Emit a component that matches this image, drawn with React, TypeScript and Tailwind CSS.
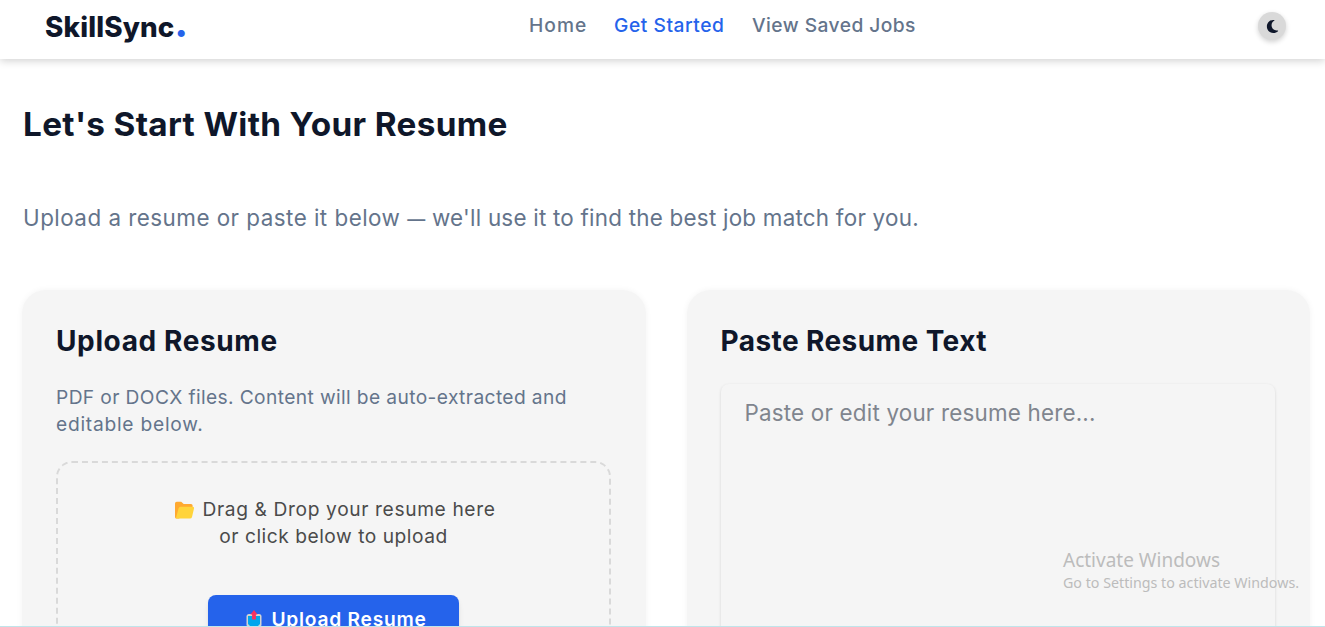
import { FaMoon } from "react-icons/fa6";

const links = [
  { label: "Home", style: "w-[57px] text-[#64748b] tracking-[1px]" },
  { label: "Get Started", style: "w-[110px] text-[#2563eb] tracking-[0.550px]" },
  { label: "View Saved Jobs", style: "w-[163px] text-[#64748b] tracking-[0.450px]" },
];

function FolderIcon() {
  return (
    <svg viewBox="0 0 20 18" className="h-[18px] w-5 shrink-0" aria-hidden="true">
      <path d="M0 2.500Q0 .8 1.700 .8h4.500L8.700 3H16q1.600 0 1.600 1.600V8L4 17.500H1.500Q0 17.500 0 16z" fill="#ffa930" />
      <path d="M3.600 7.300Q4 5.800 5.600 5.800h12q1.800 0 1.400 1.700l-2 8.500q-.4 1.500-2 1.500H1.700Q.8 17.500 1.100 16.500z" fill="#ffd43b" />
    </svg>
  );
}

function OutboxIcon() {
  return (
    <svg viewBox="0 0 16 18" className="h-[18px] w-4 shrink-0" aria-hidden="true">
      <rect x="0.500" y="4" width="15" height="13" rx="2.500" fill="#d3d3d3" />
      <path d="M2 6h12v8l-2 2H4l-2-2z" fill="#00a6ed" />
      <path d="M8 0l3.500 4.500H9.900V9.500H6.100V4.500H4.500z" fill="#f8315f" />
    </svg>
  );
}

export default function App() {
  return (
    <div className="relative h-[627px] overflow-hidden bg-white font-[Inter,sans-serif] text-[#0f172a]">
      <header className="grid h-[59px] grid-cols-[529px_1fr_auto] items-start bg-white pr-[39px] shadow-[0_2px_8px_rgba(0,0,0,0.18)]">
        <div className="pt-1 pl-[45px] text-[27.800px] leading-10 font-extrabold tracking-[0.150px] whitespace-nowrap">
          SkillSync<span className="text-[38px] leading-none tracking-normal text-[#2563eb]">.</span>
        </div>
        <nav className="flex gap-7 pt-[11px] text-[19.200px] leading-7 font-medium whitespace-nowrap">
          {links.map((l) => (
            <a key={l.label} className={l.style}>{l.label}</a>
          ))}
        </nav>
        <button className="mt-3 flex size-7 items-center justify-center rounded-full bg-[#d9d9d9] shadow-[0_2px_5px_rgba(0,0,0,0.18)]">
          <FaMoon className="size-[15px]" />
        </button>
      </header>
      <main className="pr-[15px] pl-[22px]">
        <h1 className="pt-[41px] pl-px text-[33.300px] leading-[48px] font-bold tracking-[0.350px] whitespace-nowrap">Let's Start With Your Resume</h1>
        <p className="mt-[53px] pl-px text-[22.400px] leading-[34px] tracking-[0.240px] whitespace-nowrap text-[#64748b]">
          <span className="tracking-[0.480px]">Upload a resume or paste it below </span>
          <span className="text-[18px] leading-none font-medium">—</span> we'll use it to find the best job match for you.
        </p>
        <div className="mt-[55px] grid grid-cols-2 gap-[41px]">
          <section className="h-[420px] rounded-3xl bg-[#f5f5f5] px-[34px] pt-[31px] shadow-[0_0_6px_rgba(0,0,0,0.05)]">
            <h2 className="text-[28px] leading-10 font-bold tracking-[0.620px] whitespace-nowrap">Upload Resume</h2>
            <p className="mt-[23px] text-[19.200px] leading-[27px] whitespace-nowrap text-[#64748b]">
              <span className="tracking-[0.380px]">PDF or DOCX files. Content will be auto-extracted and</span>
              <br />
              <span className="tracking-[0.750px]">editable below.</span>
            </p>
            <div className="mt-[23px] flex h-[240px] w-[555px] flex-col items-center rounded-2xl border-2 border-dashed border-[#d9d9d9] pt-[33px]">
              <div className="text-center text-[19.200px] leading-[27px] whitespace-nowrap text-[#4b4b4b]">
                <div className="flex items-center gap-[8px] pl-[3px] tracking-[0.620px]"><FolderIcon /><span>Drag &amp; Drop your resume here</span></div>
                <div className="tracking-[0.520px]">or click below to upload</div>
              </div>
              <button className="mt-[45px] flex h-[48px] w-[251px] items-center justify-center gap-[9px] rounded-lg bg-[#2563eb] pl-[6px] text-[19.200px] font-semibold tracking-[0.750px] whitespace-nowrap text-white shadow-md">
                <OutboxIcon /><span>Upload Resume</span>
              </button>
            </div>
          </section>
          <section className="h-[420px] rounded-3xl bg-[#f5f5f5] px-[34px] pt-[31px] shadow-[0_0_6px_rgba(0,0,0,0.05)]">
            <h2 className="text-[28px] leading-10 font-bold tracking-[0.420px] whitespace-nowrap">Paste Resume Text</h2>
            <textarea
              className="mt-[23px] block h-[300px] w-[554px] resize-none rounded-lg bg-[#f5f5f5] px-6 pt-3 text-[22.400px] leading-[34px] tracking-[0.200px] shadow-[0_1px_3px_rgba(0,0,0,0.14)] outline-none placeholder:text-[#80858e]"
              placeholder="Paste or edit your resume here..."
            />
          </section>
        </div>
      </main>
      <div className="absolute top-[547px] left-[1063px] font-['Noto_Sans',sans-serif] whitespace-nowrap text-[#bcbcbc]">
        <div className="text-[19px] leading-[26px]">Activate Windows</div>
        <div className="text-[14.250px] leading-5">Go to Settings to activate Windows.</div>
      </div>
      <div className="absolute inset-x-0 bottom-0 h-px bg-[#c0e4ea]" />
    </div>
  );
}
